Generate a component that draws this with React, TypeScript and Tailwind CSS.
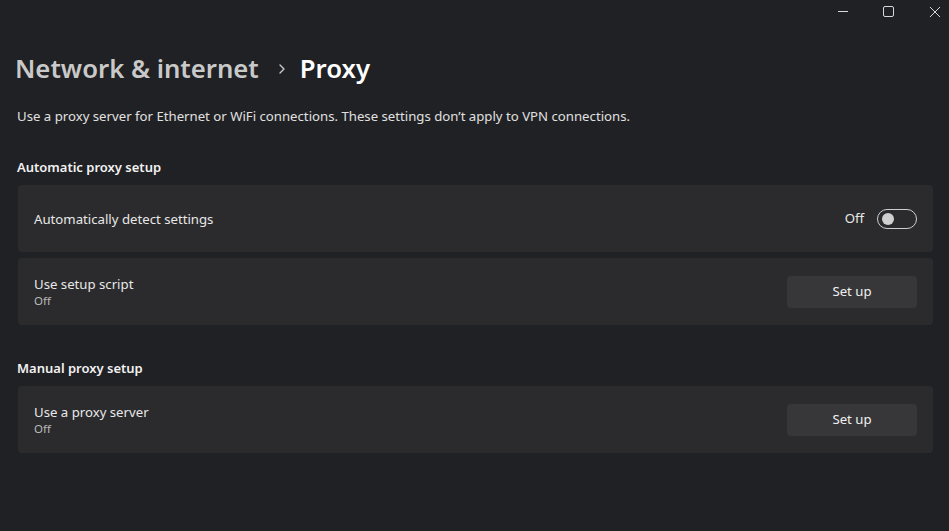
import { ChevronRight } from "lucide-react";

const font = { fontFamily: '"Segoe UI", "Noto Sans", "Open Sans", sans-serif' };

const Row = ({
  title,
  sub,
  children,
}: {
  title: string;
  sub?: string;
  children: React.ReactNode;
}) => {
  return (
    <div className="flex h-[67px] items-center justify-between rounded-[4px] bg-[#2b2b2d] pl-[16px] pr-[16px]">
      <div className="flex flex-col">
        <span className="text-[13.2px] leading-[18px] text-[#e8e8e8]">{title}</span>
        {sub && <span className="text-[11.5px] leading-[16px] text-[#b9b9b9]">{sub}</span>}
      </div>
      {children}
    </div>
  );
};

const SetupButton = () => (
  <button className="h-[32px] w-[130px] rounded-[4px] bg-[#373739] text-[13.2px] text-[#f0f0f0]">
    Set up
  </button>
);

const App = () => {
  return (
    <div
      className="h-[531px] w-[949px] overflow-hidden bg-[#202124] text-white"
      style={font}
    >
      {/* barre de titre */}
      <div className="flex h-[22px] items-center justify-end gap-[25px] pr-[4px] text-[#d8d8d8]">
        <svg width="20" height="20" viewBox="0 0 20 20" fill="none" stroke="currentColor" strokeWidth="1">
          <path d="M5 10.5h10" />
        </svg>
        <svg width="20" height="20" viewBox="0 0 20 20" fill="none" stroke="currentColor" strokeWidth="1">
          <rect x="5.5" y="5.5" width="10" height="10" rx="1.5" />
        </svg>
        <div className="ml-[2px]">
          <svg width="20" height="20" viewBox="0 0 20 20" fill="none" stroke="currentColor" strokeWidth="1">
            <path d="M5 6l10 10M15 6L5 16" />
          </svg>
        </div>
      </div>

      <div className="pl-[18px] pr-[16px]">
        <div className="mt-[27px] flex items-center">
          <h1 className="-ml-[3px] text-[25.7px] font-semibold leading-[40px] text-[#c9c9c9]">
            Network &amp; internet
          </h1>
          <ChevronRight size={16} strokeWidth={2} className="ml-[15px] mr-[10px] text-[#c9c9c9]" />
          <h1 className="text-[25.7px] font-semibold leading-[40px] text-white">Proxy</h1>
        </div>

        <p className="-ml-[1px] mt-[18px] text-[13.2px] leading-[18px] text-[#e0e0e0]">
          Use a proxy server for Ethernet or WiFi connections. These settings don’t apply to VPN
          connections.
        </p>

        <h2 className="-ml-[1px] mt-[33px] text-[13px] font-semibold leading-[18px] text-[#f2f2f2]">
          Automatic proxy setup
        </h2>
        <div className="mt-[9px] flex flex-col gap-[6px]">
          <Row title="Automatically detect settings">
            <div className="flex items-center gap-[13px]">
              <span className="text-[13.2px] text-[#e8e8e8]">Off</span>
              <div className="flex h-[20px] w-[40px] items-center rounded-full border border-[#cfcfcf] px-[4px]">
                <div className="h-[12px] w-[12px] rounded-full bg-[#d0d0d0]" />
              </div>
            </div>
          </Row>
          <Row title="Use setup script" sub="Off">
            <SetupButton />
          </Row>
        </div>

        <h2 className="-ml-[1px] mt-[34px] text-[13px] font-semibold leading-[18px] text-[#f2f2f2]">
          Manual proxy setup
        </h2>
        <div className="mt-[9px] flex flex-col">
          <Row title="Use a proxy server" sub="Off">
            <SetupButton />
          </Row>
        </div>
      </div>
    </div>
  );
};

export default App;
